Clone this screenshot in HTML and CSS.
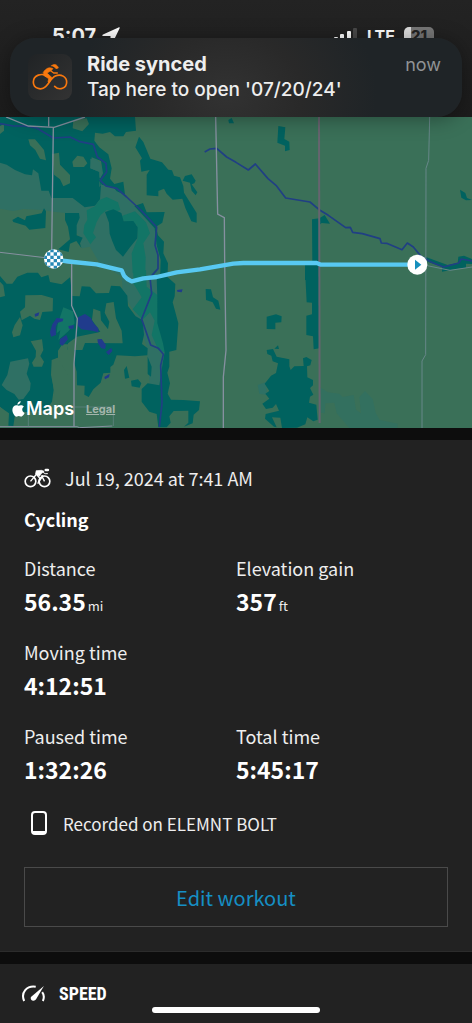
FILE: index.html
```html
<!DOCTYPE html>
<html lang="en">

<head>
    <meta charset="UTF-8">
    <meta name="viewport" content="width=device-width, initial-scale=1.0">
    <title>Cycling</title>
    <link rel="stylesheet" href="styles.css">
</head>

<body>
    <header class="top">
        <div class="status-bar">
            <div class="status-left">
                <span class="time">5:07</span>
                <svg class="location" viewBox="0 0 18 18" width="18" height="18"><path d="M16.500 .5 L1 7.500 C0 8 0 9 1 9 H8.500 V16.500 C8.500 18 9.500 18 10 17 L17.500 1.500 C18 .6 17.500 0 16.500 .5Z" fill="#fff"/></svg>
            </div>
            <div class="status-right">
                <svg viewBox="0 0 24 16" width="24" height="16">
                    <rect x="0" y="9" width="4" height="6" rx="1" fill="#fff"/>
                    <rect x="6" y="6" width="4" height="9" rx="1" fill="#fff"/>
                    <rect x="13" y="3" width="4" height="12" rx="1" fill="#fff"/>
                    <rect x="19" y="0" width="4" height="15" rx="1" fill="#484848"/>
                </svg>
                <span class="network">LTE</span>
                <span class="battery">21</span>
            </div>
        </div>
        <a class="banner" href="#workout">
            <span class="app-icon">
                <svg viewBox="0 0 108 78" width="36" height="26" fill="none" stroke="#f8780e" stroke-linecap="round" stroke-linejoin="round">
                    <path d="M42 36 C31 27 4 32 4 54 C4 73 27 81 41 68 C52 58 57 42 70 36 C87 28 104 39 104 54 C104 73 82 81 68 67" stroke-width="5"/>
                    <path d="M34 25 C42 13 51 8 63 14 L56 21 C52 23 48 24 46 28 L60 41 L51 57 L48 54 L50 44 L35 34Z" fill="#f8780e" stroke-width="2"/>
                    <path d="M56 20 L65 27 H76" stroke-width="4"/>
                    <path d="M59 5 C66 -2 76 1 79 12 L72 14 C69 9 65 7 59 5Z" fill="#f8780e" stroke-width="2"/>
                </svg>
            </span>
            <span class="banner-text">
                <strong>Ride synced</strong>
                <span>Tap here to open '07/20/24'</span>
            </span>
            <span class="banner-time">now</span>
        </a>
    </header>

    <main>
        <section class="map" aria-label="Route map">
            <svg class="map-canvas" viewBox="0 0 1416 933" preserveAspectRatio="xMidYMid slice">
                <rect width="1416" height="933" fill="#3a7058"/>
                <!-- north west -->
                <g transform="translate(0 -21)">
                    <path fill="#2f7064" d="M0 145 H290 L330 215 L400 285 L470 350 L480 510 H385 L300 462 L270 410 L245 415 L235 375 L200 345 L205 310 L160 305 L130 300 L70 297 L40 303 L0 296Z"/>
                    <path fill="#00625f" d="M0 21 H405 L408 62 L378 66 L370 79 H345 L330 66 L308 71 L285 68 L283 92 L298 112 L325 133 L335 175 L330 206 L343 222 L370 215 L375 254 L350 244 L340 232 L305 224 L298 210 L309 190 L303 153 L275 142 L271 175 L298 185 L303 226 L300 268 L285 287 L254 292 L218 264 H154 L146 242 L124 242 L115 190 L99 178 L96 196 L75 193 L45 180 L20 164 L0 158Z"/>
                    <path fill="#2f7064" d="M271 146 L300 155 L306 188 L297 208 L302 226 L298 232 L298 186 L271 175Z"/>
                    <path fill="#3a7058" d="M0 48 L12 42 V62 L0 72Z M85 88 H105 L119 104 L132 120 L138 151 L120 146 L106 120 L90 106Z M156 132 L177 128 L180 164 L210 195 V220 L190 229 L180 208 L162 194Z M217 155 L232 137 L250 140 L262 160 L252 171 H220Z M220 30 L260 25 L267 42 L247 64 L218 55Z"/>
                    <path fill="#00625f" d="M37 330 L54 320 L75 331 L79 319 L125 310 L132 295 L138 304 L136 354 L88 359 L77 347 L40 336Z M195 309 H237 L239 323 L230 345 V376 L248 383 L240 400 L244 414 L229 393 L210 401 L206 426 L175 418 L210 388 L204 350 L195 330Z"/>
                    <path fill="#00625f" d="M417 80 L430 96 L451 146 L486 157 L505 179 L516 181 L522 197 L540 202 L550 228 L552 248 L590 309 V338 L574 334 L556 294 L547 266 L518 269 L500 251 L492 236 L475 243 V259 L440 256 V194 L449 180 L424 185 L420 152 L426 145 L406 112Z M548 212 L555 198 L575 193 L587 212 L583 220 L575 223 L592 247 L587 256 L575 242 L570 218Z M685 30 L695 24 L702 40 H687Z"/>
                    <path fill="#127566" d="M298 270 L320 261 L354 277 L361 300 L340 307 L320 300 L302 315 L290 336 L279 369 L288 382 L271 403 L250 370 L253 345 L262 329 L260 301 L285 289Z M365 318 L405 304 L438 337 L450 370 L430 400 L437 442 L435 510 H399 L395 430 L413 385 L410 344 L370 332Z"/>
                    <path fill="#00625f" d="M315 306 L340 298 L364 309 L371 334 L400 333 L413 352 L412 385 L390 412 L369 440 L348 420 L337 394 L329 371 L327 338Z M403 288 L429 279 L440 307 L494 306 L487 338 L468 350 L474 376 L492 395 L490 430 L504 460 L502 510 H480 L482 450 L470 405 L464 355Z"/>
                </g>
                <!-- north east -->
                <g transform="translate(708 -21)" fill="#00625f">
                    <path d="M127 48 L148 52 L145 87 L160 95 L161 120 L147 124 V107 L124 98Z M228 328 L250 325 L266 315 L282 341 L257 339 L250 345 V510 H207 V462 L229 460Z"/>
                    <path d="M672 239 L688 249 L693 264 L708 270 L690 271 L676 263Z M570 441 L600 452 L635 465 L665 459 L667 440 L684 437 L708 447 V462 L690 461 V473 L660 477 L618 485 V470 L575 455Z"/>
                </g>
                <!-- south west -->
                <g transform="translate(0 459)">
                    <path fill="#2f7064" d="M365 10 H470 L480 110 L497 230 L488 347 L450 350 L440 230 L405 130 L368 70Z"/>
                    <path fill="#127566" d="M400 0 H438 L440 50 L475 77 V160 L505 195 L501 250 L475 240 L455 195 L464 152 L450 127 L428 149 L398 118 L425 82 L400 40Z"/>
                    <path fill="#00625f" d="M0 18 L20 41 H37 L52 20 L82 8 H114 L124 22 L145 15 L150 36 L185 43 L210 22 L217 78 L239 79 L245 49 L270 50 L288 70 L327 69 L333 47 L360 49 L382 77 L384 108 L407 139 L428 151 L432 194 L426 222 L443 235 L442 256 L405 259 L350 256 L340 284 L331 291 V308 L310 310 L302 338 L280 358 L266 381 L253 374 L254 347 L231 346 L230 305 L222 275 V220 L208 240 L202 239 L205 223 H187 L174 242 V263 L157 273 L155 310 L161 360 L156 395 L135 425 L120 430 L70 425 L45 435 L40 468 L25 467 L27 430 L0 411Z"/>
                    <path fill="#00625f" d="M470 22 H503 L526 42 L524 79 L518 97 L535 160 L529 240 L508 245 V290 L502 308 L510 340 L503 371 L513 389 L550 390 L600 394 L597 420 L581 434 L578 460 L552 470 L565 458 V422 L521 423 L508 439 L512 458 L500 472 H475 L470 432 L448 425 L425 395 V357 L443 340 L478 346 L488 280 L494 247 L489 220 L472 160 L472 80Z M393 332 L414 328 L424 340 L419 353 L395 349Z M372 300 L380 288 L388 323 L375 326Z M443 260 L455 290 L453 320 L443 312Z M617 57 L633 58 L639 82 L655 92 L661 119 L648 116 L638 97 L618 90Z"/>
                    <path fill="#3a7058" d="M0 35 L10 46 L15 78 L0 82Z M76 76 L125 75 L159 85 L158 124 L127 126 L120 150 L103 146 L90 137 L65 151 L60 125 L75 112Z M60 141 L68 166 L60 196 L40 202 L36 187 L44 165Z M92 214 L126 208 L130 240 L121 258 L132 275 L126 290 H101 L96 278 L107 261 L108 242Z M155 270 L173 263 L195 300 L213 330 V420 H152 L164 370 L153 315Z M280 116 L301 124 L303 151 L324 178 L328 155 L314 128 L319 100 L341 96 L348 145 L365 182 L368 220 L255 219 L247 240 H202 L204 220 L231 200 L290 188 L301 185 L276 150Z M0 410 L24 432 L22 470 H0Z M45 440 L85 425 L180 418 V468 H44Z"/>
                    <path fill="#2f7064" d="M31 275 L84 265 L88 281 L80 311 L92 340 L90 360 L70 387 L56 389 L43 372 L20 360 L5 345 L22 315Z"/>
                    <path fill="#127566" d="M190 112 L219 124 L224 160 L205 184 L175 210 L181 181 L170 190 L173 163Z"/>
                    <path fill="#203b8c" d="M170 144 L190 146 L188 154 L173 158 L167 172 L168 195 L153 200 L150 186 L157 163Z M234 142 L255 132 L272 143 L281 160 L295 175 V187 L276 182 L244 178 L234 168Z M180 207 L199 195 L204 208 L188 227 L179 222Z M205 168 L222 165 L220 176 H207Z M292 208 L305 207 L318 225 L315 237 L303 234 L294 220Z M318 246 L334 234 L337 243 L326 255Z M313 321 L329 311 L327 322 L315 328Z M104 132 L118 127 L115 137 L105 140Z M531 60 L548 58 L545 67 L532 65Z"/>
                </g>
                <!-- south east -->
                <g transform="translate(708 459)">
                    <path fill="#2f7064" d="M65 345 L90 336 L93 375 L70 371Z"/>
                    <path fill="#2f7064" opacity=".6" d="M252 352 L276 367 L310 371 L320 381 L353 375 L360 419 L375 430 L370 382 L387 363 L410 387 L419 428 L431 450 L485 461 L484 474 H340 L302 430 L295 398 L268 400 L266 430 L248 427Z"/>
                    <path fill="#00625f" d="M207 0 H250 V235 L233 238 L231 199 L211 195 V137 L228 133 V98 L212 97Z M92 140 L120 133 L137 139 L136 157 L118 158 V178 L92 177Z M92 240 L111 237 L122 260 L160 268 V289 L164 300 L175 289 L203 288 L201 265 L211 261 L227 270 L223 286 L213 289 L214 322 L231 330 V346 L222 354 L232 374 L222 380 L219 398 L241 404 L245 449 L232 454 L214 442 L208 463 L183 473 L138 474 L133 443 L108 442 L122 472 L114 470 L87 446 L89 432 L129 422 L120 402 L110 413 L90 417 L79 401 L100 386 L88 371 L100 363 L86 341 L105 317 L120 309 L126 280 L110 274 L106 257 L94 252Z M115 236 L126 226 L129 237Z"/>
                </g>
                <!-- rivers -->
                <g fill="none" stroke="#203f84" stroke-width="5" stroke-linejoin="round">
                    <path d="M0 20 L40 27 L75 27 L110 33 L160 63 L210 60 L240 74 L280 82 L292 120 L318 139 L320 165 L301 190 L318 207 L350 214 L380 240 L425 282 L470 330 L465 385 L474 414 L474 455 L450 482 L455 530 L425 606 L452 684 L475 694 L490 712 L482 745 L486 860 L478 930"/>
                    <path d="M614 105 L630 96 L650 94 L680 120 L708 136 L745 159 L766 141 L804 185 L828 205 L857 243 L930 255 L960 280 L985 295 L1037 332 L1051 331 L1058 346 L1087 350 L1140 365 L1144 378 L1160 379 L1206 398 L1222 378 L1240 390 L1263 418 L1293 435 L1330 450 L1376 438 L1384 426 L1416 432"/>
                </g>
                <!-- roads -->
                <g fill="none" stroke="#8690a0" stroke-width="4">
                    <path d="M18 0 L85 27 L162 31 L255 0 M146 0 V28 M160 31 L155 400 L158 430 L215 440 V566 L232 605 L222 740 V929"/>
                    <path d="M647 0 L653 291 L673 302 L674 435 L678 700 L670 780 V933"/>
                    <path d="M0 406 L160 425 M0 929 H231 L239 932 L337 927" stroke-width="3"/>
                    <path d="M222 870 H340 V927 M85 890 V929" stroke="#678789" stroke-width="2"/>
                    <path d="M1289 0 L1286 130 L1278 154 L1277 713 L1266 732 V933 M1277 445 L1350 460 L1416 450" stroke="#678789" stroke-width="3"/>
                </g>
                <path d="M957 0 L959 918" fill="none" stroke="#66646f" stroke-width="6"/>
                <!-- ride -->
                <path d="M162 428 L220 435 L290 442 L330 452 L365 460 L372 476 L382 486 L395 493 L430 484 L470 480 L530 466 L600 457 L700 440 L730 438 H950 L963 443 H1252" fill="none" stroke="#58c9f2" stroke-width="13" stroke-linejoin="round"/>
                <clipPath id="finish"><circle cx="161" cy="426" r="29"/></clipPath>
                <g clip-path="url(#finish)">
                    <rect x="131" y="396" width="60" height="60" fill="#fff"/>
                    <path stroke="#2789b5" stroke-width="10" stroke-dasharray="10 10" d="M131 401 H191 M141 411 H191 M131 421 H191 M141 431 H191 M131 441 H191 M141 451 H191"/>
                </g>
                <circle cx="1252" cy="443" r="30" fill="#fff"/>
                <path d="M1245 428 L1264 443 L1245 458Z" fill="#168fbd"/>
            </svg>
            <div class="map-credit">
                <svg viewBox="0 0 36 44" width="13" height="16"><path fill="#fff" d="M24 0 C24 6 20 10 15 10 C15 5 19 1 24 0Z M18 13 C22 11 29 10 33 16 C26 20 27 29 35 33 C32 39 28 44 24 43 C20 41 17 41 14 43 C8 45 1 33 1 25 C1 14 10 9 18 13Z"/></svg>
                <span class="maps">Maps</span>
                <a class="legal" href="#legal">Legal</a>
            </div>
        </section>

        <section class="workout" id="workout">
            <div class="date-row">
                <svg viewBox="0 0 80 60" width="27" height="20" fill="none" stroke="#fff" stroke-width="5">
                    <circle cx="19" cy="40" r="16"/>
                    <circle cx="61" cy="40" r="16"/>
                    <path d="M36 8 L52 7 L60 10 L51 17 L46 25 L34 19Z" fill="#fff" stroke-width="2"/>
                    <path d="M35 17 L47 31 L41 47 M19 40 L35 21 M61 40 L52 22 M43 43 L57 22" stroke-width="4"/>
                    <path d="M55 12 L63 17 H71" stroke-width="3"/>
                    <path d="M65 6 H71" stroke-width="8" stroke-linecap="round"/>
                </svg>
                <span>Jul 19, 2024 at 7:41 AM</span>
            </div>
            <h1>Cycling</h1>
            <dl class="stats">
                <div class="stat">
                    <dt>Distance</dt>
                    <dd>56.35<small>mi</small></dd>
                </div>
                <div class="stat">
                    <dt>Elevation gain</dt>
                    <dd>357<small>ft</small></dd>
                </div>
                <div class="stat wide">
                    <dt>Moving time</dt>
                    <dd>4:12:51</dd>
                </div>
                <div class="stat">
                    <dt>Paused time</dt>
                    <dd>1:32:26</dd>
                </div>
                <div class="stat">
                    <dt>Total time</dt>
                    <dd>5:45:17</dd>
                </div>
            </dl>
            <div class="device-row">
                <svg viewBox="0 0 18 24" width="18" height="24">
                    <rect x="2" y="1" width="14" height="22" rx="3" fill="none" stroke="#fff" stroke-width="2"/>
                    <path d="M3 20 H15 V22 H3Z M1 7 H2 V10 H1Z M16 13 H17 V17 H16Z" fill="#fff"/>
                </svg>
                <span>Recorded on ELEMNT BOLT</span>
            </div>
            <button class="edit" type="button">Edit workout</button>
        </section>

        <section class="speed">
            <svg viewBox="0 0 70 50" width="24" height="17" fill="none" stroke="#fff" stroke-width="6">
                <path d="M9 47 C-2 22 17 1 43 5 M62 21 C68 29 68 38 64 47"/>
                <path d="M67 3 L44 42 C39 50 25 45 29 35Z" fill="#fff" stroke="none"/>
            </svg>
            <h2>SPEED</h2>
        </section>
    </main>
    <div class="home-indicator"></div>
</body>

</html>
```
FILE: styles.css
```css
/* Global styles */

* {
    box-sizing: border-box;
}

body {
    margin: 0;
    min-height: 100vh;
    background-color: #222;
    color: #fff;
    font-family: "Noto Sans CJK SC", "Noto Sans", sans-serif;
}

svg {
    display: block;
    flex-shrink: 0;
}

/* Status bar and notification */

.top {
    position: relative;
    z-index: 1;
    height: 117px;
    padding-top: 26px;
    background: linear-gradient(#232323, #1c1c1c);
    font-family: Inter, sans-serif;
}

.status-bar {
    display: flex;
    justify-content: space-between;
    padding: 0 38px 0 52px;
    height: 20px;
}

.status-left,
.status-right {
    display: flex;
    align-items: center;
    gap: 6px;
}

.status-right {
    gap: 9px;
}

.time {
    font-size: 20px;
    font-weight: 700;
    line-height: 20px;
}

.network {
    font-size: 16px;
    font-weight: 700;
}

.battery {
    width: 30px;
    height: 18px;
    border-radius: 5px;
    background: linear-gradient(90deg, #ddd 7px, #777 7px);
    color: #222;
    font-size: 15px;
    font-weight: 800;
    line-height: 18px;
    text-align: center;
}

.banner {
    position: absolute;
    top: 38px;
    left: 10px;
    right: 10px;
    display: flex;
    align-items: center;
    gap: 15px;
    height: 79px;
    padding: 0 21px 2px 18px;
    border-radius: 25px;
    background: radial-gradient(ellipse 150px 120px at 48% 70%, #323232, #292929 50%, #1f2427);
    box-shadow: 0 2px 20px rgba(0, 0, 0, 0.35);
    color: #eee;
    text-decoration: none;
}

.app-icon {
    display: flex;
    align-items: center;
    justify-content: center;
    width: 44px;
    height: 46px;
    border-radius: 9px;
    background: linear-gradient(135deg, #202325, #333);
}

.banner-text {
    display: flex;
    flex: 1;
    flex-direction: column;
    font-size: 19px;
    font-weight: 500;
    line-height: 25px;
}

.banner-text strong {
    font-size: 20px;
    font-weight: 700;
}

.banner-time {
    align-self: flex-start;
    padding-top: 15px;
    color: #909395;
    font-size: 18px;
    line-height: 24px;
}

/* Map */

.map {
    position: relative;
    border-bottom: 12px solid #0d0d0d;
}

.map-canvas {
    width: 100%;
    height: auto;
}

.map-credit {
    position: absolute;
    left: 12px;
    bottom: 7px;
    display: flex;
    align-items: center;
    gap: 1px;
    font-family: Inter, sans-serif;
}

.maps {
    font-size: 18px;
    font-weight: 600;
    line-height: 24px;
}

.legal {
    margin-left: 11px;
    color: #a3b5ac;
    font-size: 11px;
    font-weight: 700;
}

/* Workout summary */

.workout {
    padding: 22px 24px 24px;
    border-bottom: 1px solid #2c2c2c;
}

.date-row,
.device-row {
    display: flex;
    align-items: center;
    height: 32px;
    font-size: 18px;
    color: #eee;
}

.date-row {
    gap: 14px;
}

h1 {
    margin: 10px 0 19px;
    font-size: 18px;
    line-height: 30px;
}

.stats {
    display: grid;
    grid-template-columns: 1fr 1fr;
    gap: 18px 0;
    margin: 0 0 20px;
}

.wide {
    grid-column: 1 / -1;
}

dt {
    color: #eee;
    font-size: 18px;
    line-height: 30px;
}

dd {
    margin: 0;
    font-size: 23px;
    font-weight: 700;
    line-height: 36px;
}

dd small {
    margin-left: 2px;
    color: #eee;
    font-size: 13px;
    font-weight: 400;
    line-height: 13px;
}

.device-row {
    gap: 15px;
    padding-left: 6px;
    font-size: 17px;
}

.edit {
    display: block;
    width: 100%;
    height: 60px;
    margin-top: 28px;
    border: 1px solid #4a4a4a;
    background: none;
    color: #168fc4;
    font-family: inherit;
    font-size: 20px;
}

/* Speed section */

.speed {
    display: flex;
    align-items: center;
    gap: 14px;
    height: 70px;
    padding-left: 21px;
    border-top: 12px solid #0d0d0d;
}

h2 {
    margin: 0;
    font-family: "Roboto Condensed", Roboto, sans-serif;
    font-size: 18px;
    font-weight: 700;
}

.home-indicator {
    position: fixed;
    left: 50%;
    bottom: 10px;
    width: 168px;
    height: 6px;
    margin-left: -84px;
    border-radius: 3px;
    background-color: #fff;
}
```
